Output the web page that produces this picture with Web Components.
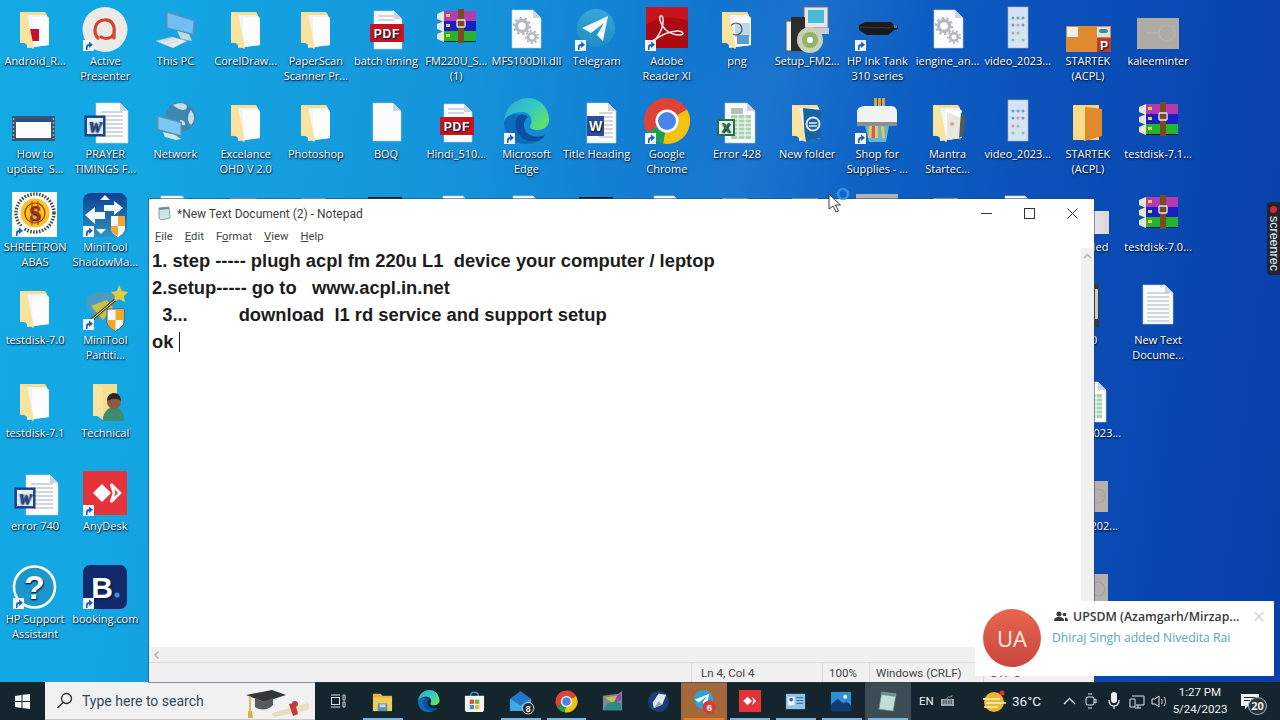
<!DOCTYPE html>
<html lang="en">
<head>
<meta charset="utf-8">
<title>Desktop</title>
<style>
    html, body { margin: 0; height: 100%; overflow: hidden; }
    win-desktop { height: 720px; }
</style>
</head>
<body>
<win-desktop>
    <desk-icon kind="folderRed" col="1" row="1">Android_R...</desk-icon>
    <desk-icon kind="presenter" col="2" row="1" short>Active<br>Presenter</desk-icon>
    <desk-icon kind="pc" col="3" row="1">This PC</desk-icon>
    <desk-icon kind="folder" col="4" row="1">CorelDraw...</desk-icon>
    <desk-icon kind="folder" col="5" row="1">PaperScan<br>Scanner Pr...</desk-icon>
    <desk-icon kind="pdf" col="6" row="1">batch timing</desk-icon>
    <desk-icon kind="rar" col="7" row="1">FM220U_S...<br>(1)</desk-icon>
    <desk-icon kind="gears" col="8" row="1">MFS100DII.dll</desk-icon>
    <desk-icon kind="telegram" col="9" row="1" short>Telegram</desk-icon>
    <desk-icon kind="adobe" col="10" row="1" short>Adobe<br>Reader XI</desk-icon>
    <desk-icon kind="folderPng" col="11" row="1">png</desk-icon>
    <desk-icon kind="setup" col="12" row="1">Setup_FM2...</desk-icon>
    <desk-icon kind="inkTank" col="13" row="1" short>HP Ink Tank<br>310 series</desk-icon>
    <desk-icon kind="gears" col="14" row="1">iengine_an...</desk-icon>
    <desk-icon kind="phone" col="15" row="1">video_2023...</desk-icon>
    <desk-icon kind="ppt" col="16" row="1">STARTEK<br>(ACPL)</desk-icon>
    <desk-icon kind="photo" col="17" row="1">kaleeminter</desk-icon>

    <desk-icon kind="film" col="1" row="2">How to<br>update  S...</desk-icon>
    <desk-icon kind="word" col="2" row="2">PRAYER<br>TIMINGS F...</desk-icon>
    <desk-icon kind="network" col="3" row="2">Network</desk-icon>
    <desk-icon kind="folder" col="4" row="2">Excelance<br>OHD V 2.0</desk-icon>
    <desk-icon kind="folder" col="5" row="2">Photoshop</desk-icon>
    <desk-icon kind="blank" col="6" row="2">BOQ</desk-icon>
    <desk-icon kind="pdf" col="7" row="2">Hindi_510...</desk-icon>
    <desk-icon kind="edge" col="8" row="2" short>Microsoft<br>Edge</desk-icon>
    <desk-icon kind="word2" col="9" row="2">Title Heading</desk-icon>
    <desk-icon kind="chrome" col="10" row="2" short>Google<br>Chrome</desk-icon>
    <desk-icon kind="excel" col="11" row="2">Error 428</desk-icon>
    <desk-icon kind="folderBlue" col="12" row="2">New folder</desk-icon>
    <desk-icon kind="printer" col="13" row="2" short>Shop for<br>Supplies - ...</desk-icon>
    <desk-icon kind="folderMantra" col="14" row="2">Mantra<br>Startec...</desk-icon>
    <desk-icon kind="phone" col="15" row="2">video_2023...</desk-icon>
    <desk-icon kind="folderOrange" col="16" row="2">STARTEK<br>(ACPL)</desk-icon>
    <desk-icon kind="rar" col="17" row="2">testdisk-7.1...</desk-icon>

    <desk-icon kind="shreetron" col="1" row="3" short>SHREETRON<br>ABAS</desk-icon>
    <desk-icon kind="shadow" col="2" row="3" short>MiniTool<br>ShadowMa...</desk-icon>
    <desk-icon kind="gears" col="3" row="3"></desk-icon>
    <desk-icon kind="folder" col="4" row="3"></desk-icon>
    <desk-icon kind="folder" col="5" row="3"></desk-icon>
    <desk-icon kind="blackTop" col="6" row="3"></desk-icon>
    <desk-icon kind="blank" col="7" row="3"></desk-icon>
    <desk-icon kind="blank" col="8" row="3"></desk-icon>
    <desk-icon kind="blackTop" col="9" row="3"></desk-icon>
    <desk-icon kind="blank" col="10" row="3"></desk-icon>
    <desk-icon kind="folder" col="11" row="3"></desk-icon>
    <desk-icon kind="folder" col="12" row="3"></desk-icon>
    <desk-icon kind="photo3" col="13" row="3"></desk-icon>
    <desk-icon kind="folder" col="14" row="3"></desk-icon>
    <desk-icon kind="blank" col="15" row="3"></desk-icon>
    <desk-icon kind="sheet" col="16" row="3">Untitled</desk-icon>
    <desk-icon kind="rar" col="17" row="3">testdisk-7.0...</desk-icon>

    <desk-icon kind="folder" col="1" row="4">testdisk-7.0</desk-icon>
    <desk-icon kind="wizard" col="2" row="4" short>MiniTool<br>Partiti...</desk-icon>
    <desk-icon kind="darkShot" col="16" row="4">100</desk-icon>
    <desk-icon kind="lines" col="17" row="4">New Text<br>Docume...</desk-icon>

    <desk-icon kind="folder" col="1" row="5">testdisk-7.1</desk-icon>
    <desk-icon kind="folderMan" col="2" row="5">Technical</desk-icon>
    <desk-icon kind="excel" col="16" row="5">video_2023...</desk-icon>

    <desk-icon kind="word" col="1" row="6">error 740</desk-icon>
    <desk-icon kind="anydesk" col="2" row="6" short>AnyDesk</desk-icon>
    <desk-icon kind="photo2" col="16" row="6">video_202...</desk-icon>

    <desk-icon kind="help" col="1" row="7" short>HP Support<br>Assistant</desk-icon>
    <desk-icon kind="booking" col="2" row="7" short>booking.com</desk-icon>
    <desk-icon kind="photo2" col="16" row="7"></desk-icon>
</win-desktop>

<script>
// icons in a 48x48 box, the middle of the box sits on the middle of the cell
const page = (x = 11, y = 5, w = 28, h = 38) => `
    <path d="M${x} ${y}h${w - 8}l8 8v${h - 8}h-${w}z" fill="#fbfcfd" stroke="#c4ced8" stroke-width=".6"/>
    <path d="M${x + w - 8} ${y}v8h8z" fill="#cdd4db"/>`;
const rows = (x1, x2, y1, y2, step = 4, c = "#a9b2ba") => {
    let s = "";
    for (let y = y1; y <= y2; y += step) s += `<path d="M${x1} ${y}H${x2}" stroke="${c}" stroke-width="1"/>`;
    return s;
};
const folder = (paper = "") => `
    <path d="M9 7h25l2 3v28H9z" fill="#f6dd95"/>
    <path d="M15 10h20l3 3v27l-22 3z" fill="#f1f3f6"/>
    <path d="M21 12l17 1v27l-17 2z" fill="#fdfdfe"/>
    ${paper}
    <path d="M9 7l7 2 7 34-1 1-13-9z" fill="#f8e39f"/>`;
const word = (x, y, s = 19) => `
    <rect x="${x}" y="${y}" width="${s}" height="${s}" fill="#1e4d9e" stroke="#16397a"/>
    <rect x="${x + 2}" y="${y + 2}" width="${s - 4}" height="${s - 4}" fill="#e9eef6"/>
    <text x="${x + s / 2}" y="${y + s - 4}" text-anchor="middle" font-family="Liberation Serif" font-style="italic" font-weight="700" font-size="${s * .75}" fill="#1e4d9e">W</text>`;
const gearDoc = `
    <circle cx="20" cy="21" r="5.5" fill="none" stroke="#b4b9bd" stroke-width="3.4"/>
    <circle cx="20" cy="21" r="8" fill="none" stroke="#b4b9bd" stroke-width="2.2" stroke-dasharray="2.4 2.6"/>
    <circle cx="30" cy="32" r="3.8" fill="none" stroke="#b4b9bd" stroke-width="2.6"/>
    <circle cx="30" cy="32" r="6" fill="none" stroke="#b4b9bd" stroke-width="2" stroke-dasharray="2 2.2"/>`;
const chrome = `
    <path d="M24 23L4 34.5A23 23 0 0 1 44 11.5z" fill="#db4437"/>
    <path d="M24 23L44 11.5A23 23 0 0 1 20 45.6z" fill="#f4c20d"/>
    <path d="M24 23L20 45.6A23 23 0 0 1 4 34.5z" fill="#1f9d55"/>
    <circle cx="24" cy="23" r="11.5" fill="#fff"/><circle cx="24" cy="23" r="9" fill="#4a84ea"/>`;
const edge = `
    <defs><linearGradient id="eg" x1="0" y1="0" x2="1" y2=".6"><stop offset="0" stop-color="#2aa8d8"/><stop offset=".6" stop-color="#35c9c0"/><stop offset="1" stop-color="#5edf6c"/></linearGradient></defs>
    <path d="M2 24C3 9 14 0 26 0c12 0 21 10 21 22 0 7-6 10-12 10-5 0-9-2-6-6 2-4-1-12-9-12-9 0-16 4-18 10z" fill="url(#eg)"/>
    <path d="M2 24c2-7 10-9 16-7-5 3-6 11-3 17 4 8 15 12 23 8-5 3-10 4-15 4C11 46 2 36 2 24z" fill="#0e6cc0"/>
    <path d="M18 17c-5 3-6 11-3 17 4 8 15 12 23 8 2-1 4-3 5-5-6 3-17 2-20-5-2-5-1-11 3-13-2-2-5-3-8-2z" fill="#0b4f9e"/>`;
const rarSlab = (y, c) => `
    <path d="M5 ${y + 3}l7-3h32v9l-1 2H12l-7-3z" fill="#e9e6da"/>
    <path d="M12 ${y}h32v10H12z" fill="${c}"/><path d="M12 ${y + 10}h32v1H12z" fill="#0b1030"/>
    <rect x="14" y="${y + 3}" width="4" height="3" fill="#e8d24a"/>`;

const ICONS = {
    folder: folder(),
    folderRed: folder(`<rect x="17" y="24" width="11" height="12" fill="#c8102e"/>`),
    folderPng: folder(`<rect x="22" y="18" width="15" height="14" fill="#bcd8e8"/><rect x="24" y="30" width="12" height="9" fill="#5a9fd0"/><circle cx="23" cy="24" r="6" fill="none" stroke="#556" stroke-width="1.2"/>`),
    folderBlue: folder(`<path d="M20 10l18 2v28l-16 3z" fill="#19639e"/><circle cx="30" cy="26" r="6.5" fill="none" stroke="#dfeaf3" stroke-width="2"/><path d="M26 25h8M26 28h8" stroke="#dfeaf3" stroke-width="1.6"/>`),
    folderMantra: folder(`<path d="M23 14l14 6-2 20-12 2z" fill="#e9e6df"/><path d="M37 14l5 6-3 18-4 2z" fill="#4d5a5e"/><circle cx="28" cy="26" r="2" fill="#c8b27a"/>`),
    folderOrange: `<path d="M9 7h26v35H9z" fill="#f4d67c"/><path d="M21 9l17 2v27l-17 5z" fill="#e08a2c"/><path d="M9 7l12 2v34L9 36z" fill="#f8dc8a"/>`,
    folderMan: `<path d="M12 7h24v32H12z" fill="#f6dd95"/><path d="M12 7l10 3v33l-10-7z" fill="#f8e39f"/>
        <path d="M22 44c0-10 6-14 11-14s10 4 10 14z" fill="#3d8c6c"/><circle cx="33" cy="25" r="7" fill="#8c5b3c"/><path d="M26 24c0-6 4-8 7-8 4 0 7 3 7 8-3-3-9-3-14 0z" fill="#2f2520"/>`,
    presenter: `<circle cx="24" cy="24.5" r="22.5" fill="#eceae6"/>
        <path d="M17 33c-5-5-4-17 6-18 8-1 11 6 10 12v6" fill="none" stroke="#d2452f" stroke-width="3.2" stroke-linecap="round"/>
        <path d="M33 29c-3 5-10 6-14 2" fill="none" stroke="#d2452f" stroke-width="3"/>`,
    pc: `<path d="M15 6l29 9-1 15-28-7z" fill="#5d8fb8"/><path d="M16.500 8l26 8-1 12.500-25-6z" fill="#6fc0f2"/>
        <path d="M26 26l12 3 3 7-11-2z" fill="#c6d6e0"/>
        <path d="M5 36l16-4 15 4-14 7z" fill="#e6edf2" stroke="#a7b8c4" stroke-width=".5"/><path d="M9 36l12-3M12 37l12-3M15 39l12-3" stroke="#b9c6cf" stroke-width=".7"/>`,
    network: `<circle cx="29.500" cy="19" r="15" fill="#3f88ad"/><path d="M22 7c6-3 14-2 14 2-1 5-9 3-14-2zM40 12c4 5 4 11 0 15-4-3-4-10 0-15zM29 22c3 0 6 2 5 5-3 1-5-2-5-5z" fill="#c9dde8"/>
        <path d="M6 17l25 7v15L6 32z" fill="#5d8fb8"/><path d="M7.500 19l22 6v12l-22-6z" fill="#7ac8f4"/><path d="M12 34l12 3 6 4-5 1-11-3z" fill="#d5e3ec"/>`,
    pdf: page(12, 6, 28, 38) + rows(16, 32, 11, 17) + `
        <rect x="8" y="19" width="34" height="18" fill="#c8141f"/>
        <text x="25" y="32.5" text-anchor="middle" font-family="Liberation Sans" font-weight="700" font-size="12" letter-spacing=".8" fill="#fff">PDF</text>`,
    blank: page(),
    sheet: `<defs><linearGradient id="sg"><stop offset="0" stop-color="#fff"/><stop offset="1" stop-color="#d8d8d8"/></linearGradient></defs><rect x="2" y="20" width="43" height="23" fill="url(#sg)"/>`,
    gears: page(10, 5, 29, 38) + gearDoc,
    lines: page(9, 1, 30, 39) + rows(13, 35, 9, 37),
    word: page(15, 5, 32, 40) + rows(20, 42, 14, 41) + word(4, 18, 20),
    word2: page(14, 5, 29, 40) + rows(26, 40, 15, 41) + `<rect x="14" y="18" width="17" height="20" fill="#2a4f9b"/>
        <text x="22.5" y="33" text-anchor="middle" font-family="Liberation Sans" font-weight="700" font-size="14" fill="#fff">W</text>`,
    excel: `<path d="M12 5h22l8 8v32H12z" fill="#fbfcfb" stroke="#bcc7c4" stroke-width=".6"/>
        <path d="M34 5v8h8z" fill="#cdd4db"/><path d="M18 10h12v6H18z" fill="#b6bdb9"/><path d="M18 17h20v24H18z" fill="#a9d2b2"/>
        <path d="M18 21h20M18 25h20M18 29h20M18 33h20M18 37h20M25 17v24M32 17v24" stroke="#fff"/>
        <rect x="4" y="21" width="18" height="17" fill="#1f7346"/><rect x="6" y="23" width="14" height="13" fill="#e9f3ed"/>
        <text x="13" y="34" text-anchor="middle" font-family="Liberation Sans" font-weight="700" font-size="13" fill="#1f7346">X</text>`,
    rar: rarSlab(6, "#b63ab0") + rarSlab(16, "#1a1fc4") + rarSlab(26, "#25b52c") + `
        <rect x="26" y="4" width="6" height="34" fill="#7a4a22"/><rect x="25" y="15" width="8" height="7" rx="1" fill="none" stroke="#e6e6e6" stroke-width="1.4"/>`,
    telegram: `<defs><linearGradient id="tg" x1="0" y1="0" x2="0" y2="1"><stop offset="0" stop-color="#37a6d8"/><stop offset="1" stop-color="#1d8fc0"/></linearGradient></defs>
        <circle cx="23" cy="23" r="19" fill="url(#tg)"/>
        <path d="M9 23L35 11l-5 25-6-6 7-12-13 10z" fill="#f2fafd"/>`,
    adobe: `<rect x="3" y="2" width="42" height="41" fill="#ac0a12"/><path d="M3 2h42v14C30 10 15 12 3 20z" fill="#c8141c"/>
        <path d="M9 36c6-2 12-14 11-22-.5-5-4-4-3 1 2 8 9 15 20 15 5 0 3-4-2-4-8 0-18 4-24 10-1 1-2 1-2 0z" fill="none" stroke="#f4e8e8" stroke-width="1.5"/>`,
    setup: `<rect x="21" y="2" width="24" height="21" fill="#e4e6e8" stroke="#777"/><rect x="25" y="5" width="16" height="13" fill="#49b9d6"/><rect x="26" y="23" width="20" height="6" fill="#c9ccd0"/>
        <rect x="3" y="16" width="17" height="30" fill="#f1f1f1" stroke="#555"/><rect x="8" y="12" width="14" height="34" fill="#2d2d2d"/>
        <circle cx="27" cy="35" r="13" fill="#c8d2b6"/><circle cx="27" cy="35" r="8" fill="#8fb46a"/><circle cx="27" cy="35" r="3" fill="#fff"/>`,
    inkTank: `<path d="M6 20l6-3h26l3 3h4v4l-4 1-6 5H14l-8-5z" fill="#1a1a1a"/><path d="M7 22l30 1 4-3" stroke="#3f3f3f" fill="none"/><rect x="41" y="20" width="3" height="3" fill="#58707c"/>`,
    blackTop: `<rect x="6" y="6" width="34" height="30" fill="#1d1a16"/>`,
    printer: `<path d="M21 0h3v9h-3zM25 0h3v9h-3zM29 0h3v9h-3z" fill="#d6a23c"/>
        <path d="M4 14c0-4 4-6 8-6h26c4 0 6 3 6 6v10H4z" fill="#f0f2f3"/><path d="M4 24h40v4H4z" fill="#8a8f92"/>
        <path d="M12 28h24l-3 16H16z" fill="#5fb6d6"/><path d="M16 28l-1 12h3l1-12zM22 28v12h3V28zM28 28l1 12h3l-1-12z" fill="#e7c94c"/><path d="M19 28v12h3V28z" fill="#d9566a"/>`,
    phone: `<rect x="14" y="2" width="20" height="41" fill="#d7e3f0" stroke="#a5b6cc" stroke-width=".6"/>
        <g fill="#6f9bc8"><circle cx="19" cy="13" r="1.5"/><circle cx="24" cy="13" r="1.5"/><circle cx="29" cy="13" r="1.5"/><circle cx="19" cy="20" r="1.5"/><circle cx="29" cy="20" r="1.5"/></g>
        <g fill="#dc8fa0"><circle cx="24" cy="20" r="1.5"/><circle cx="19" cy="28" r="1.5"/></g><g fill="#7fc7a2"><circle cx="24" cy="28" r="1.5"/><circle cx="29" cy="35" r="1.5"/><circle cx="19" cy="35" r="1.5"/></g>`,
    ppt: `<rect x="2" y="21" width="45" height="26" fill="#e08a30"/><rect x="3" y="22" width="11" height="10" fill="#eef0ef"/>
        <rect x="33" y="22" width="13" height="10" fill="#dde4e4"/><rect x="35" y="24" width="9" height="4" rx="2" fill="#3c86b0"/>
        <rect x="33" y="33" width="14" height="14" fill="#c23b22"/><text x="40" y="44.5" text-anchor="middle" font-family="Liberation Sans" font-weight="700" font-size="12" fill="#fff">P</text>`,
    photo: `<rect x="3" y="13" width="42" height="31" fill="#aeaba6"/><circle cx="33" cy="28" r="8" fill="none" stroke="#b8b5b0" stroke-width="1.200"/><path d="M12 28h14" stroke="#b6b3ae" stroke-width="2"/>`,
    photo2: `<rect x="2" y="11" width="42" height="31" fill="#b4b1ac"/><circle cx="34" cy="26" r="7" fill="none" stroke="#a5a29d" stroke-width="1.200"/>`,
    photo3: `<rect x="3" y="3" width="42" height="31" fill="#b4b1ac"/>`,
    darkShot: `<rect x="2" y="0" width="33" height="43" fill="#3c3a38"/><rect x="31" y="5" width="3" height="30" fill="#c9c9c6"/>`,
    film: `<rect x="1" y="18" width="43" height="25" fill="#39566c"/><rect x="5" y="21" width="35" height="19" fill="#fdfdfd"/><rect x="5" y="21" width="35" height="3" fill="#2b4a9a"/>
        <path d="M2.500 20v21M42.500 20v21" stroke="#8fa4b3" stroke-width="1.600" stroke-dasharray="2 2"/>`,
    edge,
    chrome,
    shreetron: `<rect x="1" y="1" width="45" height="45" fill="#fff"/><circle cx="24" cy="22" r="19" fill="none" stroke="#4a4a4a" stroke-width="3.400" stroke-dasharray="1.600 1.400"/>
        <circle cx="24" cy="22" r="14.500" fill="#f6c81c"/><circle cx="24" cy="22" r="10" fill="none" stroke="#b5281c" stroke-width="1.200"/>
        <text x="24" y="29" text-anchor="middle" font-family="Liberation Serif" font-weight="700" font-size="20" fill="#b5281c">S</text><path d="M21 10v24M27 10v24" stroke="#b5281c"/>`,
    shadow: `<defs><linearGradient id="sh" x1="0" y1="0" x2="0" y2="1"><stop offset="0" stop-color="#0f3f8e"/><stop offset="1" stop-color="#2f93c4"/></linearGradient></defs>
        <rect x="2" y="2" width="44" height="44" rx="8" fill="url(#sh)"/>
        <path d="M24 4l5 5H19zM20 43l-5-5h10z" fill="#f2f7fa"/><path d="M4 24l10-8v5h10v7H14v5zM42 17l-9-7v4H23v6h10v4z" fill="#f2f7fa"/>
        <path d="M30 25h14v12c0 5-4 7-7 9-3-2-7-4-7-9z" fill="#f7f7f5"/><path d="M37 25h7v10h-7zM30 35h7v10c-3-1-7-4-7-8z" fill="#efa72e"/>`,
    wizard: `<path d="M6 14c5-7 22-8 30-2l-8 24C16 38 3 28 6 14z" fill="#4f9bc0"/><path d="M10 22l16-6 6 8-10 12z" fill="#c8c24a"/>
        <path d="M38 1l3 6 6 1-4 4 1 6-6-3-5 3 1-6-4-4 6-1z" fill="#e8cb3c"/><path d="M8 38L34 16" stroke="#5a4a22" stroke-width="3"/><path d="M8 38L34 16" stroke="#efe6b0"/>
        <path d="M26 25h17v12c0 5-5 8-8.500 10-3.500-2-8.500-5-8.500-10z" fill="#f6f6f4" stroke="#2d5d96"/><path d="M34.500 25H43v11h-8.500zM26 36h8.500v11c-3.500-2-8.500-5-8.500-11z" fill="#efa72e"/>`,
    anydesk: `<rect x="2" y="1" width="44" height="44" fill="#e4343a"/><path d="M21 14l9 9-9 9-9-9z" fill="#fff"/><path d="M30 14l9 9-9 9 3-9z" fill="none" stroke="#fff" stroke-width="2.600"/>`,
    help: `<circle cx="23.500" cy="24" r="20.500" fill="#1b97cc" stroke="#fff" stroke-width="2.500"/>
        <text x="23.500" y="36" text-anchor="middle" font-family="Liberation Sans" font-weight="700" font-size="34" fill="#fff">?</text>`,
    booking: `<rect x="2" y="2" width="44" height="44" rx="7" fill="#14296b"/>
        <text x="21" y="35" text-anchor="middle" font-family="Liberation Sans" font-weight="700" font-size="30" fill="#fff">B</text><circle cx="36" cy="32" r="2.600" fill="#2f9ad8"/>`
};
const SHORTCUT = `<g transform="translate(2,35)"><rect width="11" height="11" fill="#f3f6fa"/>
    <path d="M3 10V7c0-2 1-3 3-3V1.500L10 4.800 6 8V6C5 6 4.500 7 4.500 10z" fill="#1b62c6"/></g>`;

class WinDesktop extends HTMLElement {
    constructor() {
        super();
        this.attachShadow({ mode: "open" });
    }

    connectedCallback() {
        this.shadowRoot.innerHTML = `
            <style>
                :host {
                    display: flex;
                    flex-direction: column;
                    position: relative;
                    overflow: hidden;
                    font-family: "Open Sans", "Noto Sans", sans-serif;
                }
                .wall {
                    flex: 1;
                    min-height: 0;
                    overflow: hidden;
                    display: grid;
                    grid-template-columns: repeat(18, 70.2px);
                    grid-auto-rows: 93px;
                    padding-top: 5px;
                    background:
                        linear-gradient(112deg, transparent 46%, rgba(255,255,255,.05) 52%, transparent 60%),
                        linear-gradient(97deg, #14a9e4 0%, #13a8e4 10%, #1593da 35%, #0f6ccb 58%, #0b50b9 78%, #083fa9 100%);
                }
            </style>
            <div class="wall"><slot></slot></div>
            <task-bar></task-bar>
            <note-pad></note-pad>
            <toast-card></toast-card>
            <rec-tab></rec-tab>
            <mouse-pointer></mouse-pointer>
        `;
    }
}

class DeskIcon extends HTMLElement {
    constructor() {
        super();
        this.attachShadow({ mode: "open" });
    }

    connectedCallback() {
        this.style.gridColumn = this.getAttribute("col");
        this.style.gridRow = this.getAttribute("row");
        const kind = this.getAttribute("kind");
        this.shadowRoot.innerHTML = `
            <style>
                :host {
                    display: flex;
                    flex-direction: column;
                    align-items: center;
                    min-width: 0;
                    font: 11px/14.5px "Open Sans", sans-serif;
                    color: #fff;
                    text-align: center;
                    text-shadow: 0 1px 2px #001a3a, 1px 1px 1px rgba(0,20,50,.7);
                }
                svg { width: 48px; height: 48px; flex: none; overflow: visible; }
                .name { margin-top: 1px; width: 76px; white-space: pre; }
            </style>
            <svg viewBox="0 0 48 48">${ICONS[kind]}${this.hasAttribute("short") ? SHORTCUT : ""}</svg>
            <div class="name"><slot></slot></div>
        `;
    }
}

class NotePad extends HTMLElement {
    constructor() {
        super();
        this.attachShadow({ mode: "open" });
    }

    connectedCallback() {
        this.shadowRoot.innerHTML = `
            <style>
                :host {
                    position: absolute;
                    left: 149px;
                    top: 199px;
                    width: 945px;
                    height: 483px;
                    display: flex;
                    flex-direction: column;
                    background: #fff;
                    box-shadow: 0 0 0 1px rgba(40,70,100,.55);
                    font: 12px Roboto, sans-serif;
                    color: #333;
                }
                .title { height: 28px; display: flex; align-items: center; padding-left: 8px; flex: none; }
                .title svg.app { width: 15px; height: 15px; margin-right: 5px; }
                .title span { flex: 1; color: #3c3c3c; font-size: 12px; padding-top: 1px; }
                .ctl { width: 43px; height: 28px; display: flex; align-items: center; justify-content: center; }
                .ctl svg { width: 11px; height: 11px; }
                .menu { height: 21px; box-sizing: border-box; padding: 0 0 2px 6px; display: flex; align-items: center; gap: 12px; flex: none; font-size: 11.3px; color: #444; }
                .mid { flex: 1; display: flex; min-height: 0; }
                .edit {
                    flex: 1;
                    margin: -1px 0 0;
                    padding: 0 0 0 3px;
                    font: 700 18.35px/27px "Liberation Sans", Arial, sans-serif;
                    color: #1c1c1c;
                    white-space: pre;
                }
                .caret { display: inline-block; width: 1px; height: 20px; background: #222; vertical-align: -4px; }
                .vbar { width: 13px; background: #f0f0f0; display: flex; justify-content: center; padding-top: 5px; box-sizing: border-box; }
                .vbar svg, .hbar svg { width: 9px; height: 6px; }
                .hbar { height: 15px; background: #f0f0f0; flex: none; display: flex; align-items: center; padding-left: 3px; border-bottom: 1px solid #dcdcdc; }
                .status { height: 19px; background: #f0f0f0; flex: none; display: flex; align-items: center; font-size: 11.6px; color: #444; }
                .status div { box-sizing: border-box; height: 100%; line-height: 20px; padding-left: 9px; border-left: 1px solid #d9d9d9; }
                .status .sp { flex: 1; border: 0; padding: 0; }
            </style>
            <div class="title">
                <svg class="app" viewBox="0 0 15 15">
                    <path d="M2 2l10-1 1 11-9 2-2-2z" fill="#cfe6e2" stroke="#8aa0a0"/>
                    <path d="M2 2l10-1v2L2 4z" fill="#6c8a90"/>
                </svg>
                <span>*New Text Document (2) - Notepad</span>
                <div class="ctl"><svg viewBox="0 0 11 11"><path d="M0 5.500h11" stroke="#333"/></svg></div>
                <div class="ctl"><svg viewBox="0 0 11 11"><rect x=".5" y=".5" width="10" height="10" fill="none" stroke="#333"/></svg></div>
                <div class="ctl"><svg viewBox="0 0 11 11"><path d="M.5.500l10 10M10.500.500l-10 10" stroke="#333"/></svg></div>
            </div>
            <div class="menu">
                <span><u>F</u>ile</span><span><u>E</u>dit</span><span>F<u>o</u>rmat</span><span><u>V</u>iew</span><span><u>H</u>elp</span>
            </div>
            <div class="mid">
                <div class="edit">1. step ----- plugh acpl fm 220u L1  device your computer / leptop
2.setup----- go to   www.acpl.in.net
  3...          download  l1 rd service and support setup
ok <i class="caret"></i></div>
                <div class="vbar"><svg viewBox="0 0 9 6"><path d="M1 5l3.500-3.500L8 5" fill="none" stroke="#b5b5b5" stroke-width="1.500"/></svg></div>
            </div>
            <div class="hbar"><svg viewBox="0 0 9 6" style="transform:rotate(-90deg)"><path d="M1 5l3.500-3.500L8 5" fill="none" stroke="#b5b5b5" stroke-width="1.500"/></svg></div>
            <div class="status">
                <div class="sp"></div>
                <div style="width:131px">Ln 4, Col 4</div>
                <div style="width:47px;padding-left:6px">100%</div>
                <div style="width:114px;padding-left:6px">Windows (CRLF)</div>
                <div style="width:111px;padding-left:6px">UTF-8</div>
            </div>
        `;
    }
}

class ToastCard extends HTMLElement {
    constructor() {
        super();
        this.attachShadow({ mode: "open" });
    }

    connectedCallback() {
        this.shadowRoot.innerHTML = `
            <style>
                :host {
                    position: absolute;
                    left: 975px;
                    top: 601px;
                    width: 299px;
                    height: 75px;
                    box-sizing: border-box;
                    padding: 8px 8px 0 8px;
                    background: #fff;
                    display: flex;
                    gap: 11px;
                    font: 12.300px "Open Sans", sans-serif;
                }
                .av {
                    width: 58px;
                    height: 58px;
                    border-radius: 50%;
                    flex: none;
                    background: linear-gradient(#e8654f, #c9473e);
                    color: #fdeee6;
                    font-size: 22px;
                    display: flex;
                    align-items: center;
                    justify-content: center;
                }
                .txt { flex: 1; min-width: 0; margin-top: -1px; }
                .head { display: flex; align-items: center; gap: 5px; height: 16px; font-weight: 600; color: #3a3a3a; white-space: nowrap; padding-left: 2px; }
                .head svg { width: 14px; height: 11px; flex: none; }
                .head span { flex: 1; }
                .x { width: 11px; height: 11px; }
                .sub { margin-top: 5px; color: #57a7bd; white-space: nowrap; font-size: 12.200px; line-height: 18px; }
            </style>
            <div class="av">UA</div>
            <div class="txt">
                <div class="head">
                    <svg viewBox="0 0 14 11"><circle cx="5" cy="3" r="2.500" fill="#3a3a3a"/><path d="M0 10c0-3 2-4 5-4s5 1 5 4z" fill="#3a3a3a"/><circle cx="10.500" cy="3.500" r="1.800" fill="#3a3a3a"/><path d="M11 6.500c2 0 3 1.500 3 3.500h-3z" fill="#3a3a3a"/></svg>
                    <span>UPSDM (Azamgarh/Mirzap...</span>
                    <svg class="x" viewBox="0 0 11 11"><path d="M1 1l9 9M10 1l-9 9" stroke="#cfd3d6" stroke-width="1.300"/></svg>
                </div>
                <div class="sub">Dhiraj Singh added Nivedita Rai</div>
            </div>
        `;
    }
}

class RecTab extends HTMLElement {
    constructor() {
        super();
        this.attachShadow({ mode: "open" });
    }

    connectedCallback() {
        this.shadowRoot.innerHTML = `
            <style>
                :host {
                    position: absolute;
                    left: 1267px;
                    top: 202px;
                    width: 13px;
                    height: 73px;
                    background: #20262c;
                    border-radius: 4px 0 0 4px;
                    color: #eef;
                    display: flex;
                    flex-direction: column;
                    align-items: center;
                    font: 12.500px/13px "Liberation Sans", sans-serif;
                }
                i { width: 7px; height: 7px; border-radius: 50%; background: #d8262c; margin-top: 4px; flex: none; }
                span { writing-mode: vertical-rl; margin-top: 3px; }
            </style>
            <i></i><span>screenrec</span>
        `;
    }
}

class MousePointer extends HTMLElement {
    constructor() {
        super();
        this.attachShadow({ mode: "open" });
    }

    connectedCallback() {
        this.shadowRoot.innerHTML = `
            <style>
                :host { position: absolute; left: 828px; top: 187px; width: 24px; height: 28px; }
                svg { width: 24px; height: 28px; overflow: visible; }
            </style>
            <svg viewBox="0 0 24 28">
                <circle cx="15" cy="7" r="5" fill="none" stroke="#3a9be8" stroke-width="2.500" opacity=".85"/>
                <path d="M1 7v15l4-3 3 6 2.500-1-3-6h5z" fill="#fff" stroke="#222" stroke-width=".9"/>
            </svg>
        `;
    }
}

const TASK_ICONS = [
    { svg: `<path d="M2 4h8l2 2h10v4H2z" fill="#e3b53a"/><path d="M2 8h20v14H2z" fill="#f0cd58"/><path d="M7 14h10v8H7z" fill="#5b93b5"/><path d="M9 15h6v3H9z" fill="#c9dce6"/>`, on: 1 },
    { svg: edge.replace(/id="eg"/, 'id="eg2"').replace("url(#eg)", "url(#eg2)"), box: "0 0 48 48" },
    { svg: `<path d="M8 6c0-5 8-5 8 0" fill="none" stroke="#3a93cf" stroke-width="1.500"/><path d="M2 6h20v14c0 2-1 3-3 3H5c-2 0-3-1-3-3z" fill="#f4f4f4"/><rect x="7" y="10" width="4.500" height="4.500" fill="#e5532d"/><rect x="12.500" y="10" width="4.500" height="4.500" fill="#7cb53a"/><rect x="7" y="15.500" width="4.500" height="4.500" fill="#2c9be0"/><rect x="12.500" y="15.500" width="4.500" height="4.500" fill="#f0b82c"/>` },
    { svg: `<path d="M1 9l11-8 11 8v12H1z" fill="#1f78c8"/><path d="M1 9l11 7 11-7v13H1z" fill="#40a6e6"/><circle cx="20" cy="19" r="6" fill="#2a3135" stroke="#cfd6da"/><text x="20" y="22.500" text-anchor="middle" font-family="Liberation Sans" font-weight="700" font-size="9" fill="#fff">8</text>`, on: 1 },
    { svg: chrome, box: "0 0 48 46", on: 1 },
    { svg: `<path d="M2 6l16-2 4-3v20H2z" fill="#7c8a94"/><path d="M4 8l13-2-4 8z" fill="#c9c04a"/><path d="M13 14l4-8 4-3v7z" fill="#9a3fb4"/><path d="M3 20c3-7 10-9 18-6v7H3z" fill="#2b8a8c"/>` },
    { svg: `<circle cx="12" cy="12" r="11" fill="#1c3d78"/><path d="M7 19l-1-6 6-9 8 1-4 10z" fill="#e6ebf0"/><path d="M7 19l5-7 4 3z" fill="#9aa7b4"/>` },
    { svg: `<circle cx="11" cy="10" r="10" fill="#2fa3d6"/><path d="M2 10l15-6-3 13-4-4 4-6-8 6z" fill="#f3fafd"/><circle cx="17" cy="18" r="7" fill="#d83b38"/><text x="17" y="21.500" text-anchor="middle" font-family="Liberation Sans" font-weight="700" font-size="10" fill="#fff">6</text>`, bg: "#a5683a", line: "#ee7a20" },
    { svg: `<rect x="0" y="0" width="23" height="23" fill="#e4343a"/><path d="M9 7l4.500 4.500L9 16l-4.500-4.500z" fill="#fff"/><path d="M13.500 7l4.500 4.500-4.500 4.500 1.500-4.500z" fill="#fff"/>`, on: 1 },
    { svg: `<rect x="2" y="4" width="20" height="16" fill="#8fc4e4"/><rect x="4" y="7" width="7" height="9" fill="#e9f2f8"/><circle cx="7.500" cy="10" r="2" fill="#2a6ea8"/><path d="M13 8h7M13 11h7M13 14h7" stroke="#2a6ea8"/>`, on: 1 },
    { svg: `<rect x="1" y="2" width="21" height="20" fill="#2f8fd2"/><path d="M1 22V15l7-6 6 5 3-2 5 4v6z" fill="#123c78"/><circle cx="16" cy="7" r="2" fill="#fff"/>`, on: 1 },
    { svg: `<path d="M6 2l15 2-3 18-15-2z" fill="#bfe0d6" stroke="#6e8a84" stroke-width=".7"/><path d="M6 2l15 2-1 3L5 5z" fill="#6f8f8a"/>`, bg: "#3c4c55", on: 1 }
];

class TaskBar extends HTMLElement {
    constructor() {
        super();
        this.attachShadow({ mode: "open" });
    }

    connectedCallback() {
        const buttons = TASK_ICONS.map(t => {
            const line = t.line || (t.on ? "#7fb5dd" : "");
            return `<div class="btn" style="background:${t.bg || "transparent"}">
                <svg viewBox="${t.box || "0 0 24 24"}">${t.svg}</svg>
                ${line ? `<i style="background:${line}"></i>` : ""}
            </div>`;
        }).join("");

        this.shadowRoot.innerHTML = `
            <style>
                :host {
                    display: flex;
                    height: 38px;
                    flex: none;
                    background: #14252e;
                    color: #eef2f4;
                    font: 12px Roboto, sans-serif;
                }
                .start { width: 45px; display: flex; align-items: center; justify-content: center; flex: none; }
                .start svg { width: 15px; height: 15px; }
                .search {
                    width: 270px;
                    flex: none;
                    box-sizing: border-box;
                    background: #f1f1f1;
                    display: flex;
                    align-items: center;
                    padding-left: 11px;
                    color: #33495a;
                    font-size: 14px;
                    border-bottom: 1px solid #c9c9c9;
                }
                .search .glass { width: 17px; height: 17px; margin-right: 9px; }
                .search .cap { width: 68px; height: 34px; margin-left: auto; margin-right: 3px; }
                .view { width: 45px; flex: none; display: flex; align-items: center; justify-content: center; }
                .view svg { width: 16px; height: 16px; }
                .btn { width: 45.9px; flex: none; display: flex; align-items: center; justify-content: center; position: relative; }
                .btn svg { width: 23px; height: 23px; overflow: visible; }
                .btn i { position: absolute; left: 3px; right: 3px; bottom: 0; height: 2px; }
                .tray { margin-left: auto; padding-right: 9px; display: flex; align-items: center; height: 100%; }
                .tray > * { flex: none; }
                .tray svg { display: block; }
                .clock { width: 60px; text-align: center; line-height: 17px; font-size: 11.500px; }
                .note { position: relative; width: 30px; height: 100%; display: flex; align-items: center; margin-left: 11px; }
                .note b {
                    position: absolute;
                    left: 7px;
                    top: 15px;
                    width: 19px;
                    height: 18px;
                    border-radius: 50%;
                    background: #2a3439;
                    border: 1px solid #aab4b8;
                    box-sizing: border-box;
                    font: 700 11px/16px "Open Sans", sans-serif;
                    text-align: center;
                }
            </style>
            <div class="start">
                <svg viewBox="0 0 15 15"><path d="M0 2l6.500-1v6H0zM7.500.800L15 0v7H7.500zM0 8h6.500v6L0 13zM7.500 8H15v7l-7.500-1z" fill="#f3f5f6"/></svg>
            </div>
            <div class="search">
                <svg class="glass" viewBox="0 0 17 17"><circle cx="10.500" cy="6.500" r="5" fill="none" stroke="#2b2b2b" stroke-width="1.300"/><path d="M7 10.500L1.500 16" stroke="#2b2b2b" stroke-width="1.500"/></svg>
                <span>Type here to search</span>
                <svg class="cap" viewBox="0 0 68 34">
                    <path d="M2 11l26-5 14 5-22 7z" fill="#33373a"/><path d="M11 14v9c5 4 14 3 18-2v-7l-9 4z" fill="#55595c"/>
                    <path d="M6 12v15" stroke="#c9a83a" stroke-width="1.500"/><path d="M4 27h4l1 7H4z" fill="#d8b63c"/>
                    <path d="M28 29l36-10c2 2 2 5 0 7L31 33c-3-1-4-3-3-4z" fill="#e5dfc1"/><path d="M45 20l4 12 5-2-3-11z" fill="#c43a3a"/><circle cx="51" cy="20" r="3" fill="#c43a3a"/>
                </svg>
            </div>
            <div class="view">
                <svg viewBox="0 0 16 16"><path d="M1 2h9M1 14h9" stroke="#dfe5e8"/><rect x="1.500" y="4.500" width="8" height="7" fill="none" stroke="#dfe5e8"/><path d="M13 2h2v5h-2zM13 9h2v5h-2z" fill="none" stroke="#dfe5e8" stroke-width=".9"/></svg>
            </div>
            ${buttons}
            <div class="tray">
                <span style="width:19px;font-size:11.500px;margin-right:2px">EN</span>
                <svg width="15" height="12" viewBox="0 0 15 12" style="margin-right:27px"><path d="M1 4h13v7H1z" fill="#9ba4a8"/><path d="M7 4c0-2 1-2 3-2s2-1 2-2" fill="none" stroke="#9ba4a8"/><path d="M3 6h9M3 8h9" stroke="#14252e" stroke-dasharray="1.500 1"/></svg>
                <svg width="24" height="24" viewBox="0 0 24 24" style="margin-right:6px"><circle cx="12" cy="13" r="10" fill="#eeb62c"/><path d="M1 10h17M4 14h20M2 18h14" stroke="#fff4c8" stroke-width="1.600"/><circle cx="20" cy="4" r="2.500" fill="#d9362f"/></svg>
                <span style="width:30px;font-size:13.500px;margin-right:21px">36°C</span>
                <svg width="13" height="8" viewBox="0 0 13 8" style="margin-right:9px"><path d="M1 7l5.500-5.500L12 7" fill="none" stroke="#e8edef" stroke-width="1.300"/></svg>
                <svg width="12" height="16" viewBox="0 0 12 16" style="margin-right:11px"><rect x="1" y="4" width="8" height="8" rx="2" fill="none" stroke="#dfe5e8"/><path d="M9 7l2-1v4l-2-1M3 1h4M3 15h4" fill="none" stroke="#dfe5e8"/></svg>
                <svg width="12" height="18" viewBox="0 0 12 18" style="margin-right:9px"><rect x="3" y="0" width="6" height="11" rx="3" fill="#eef2f4"/><path d="M1 8c0 4 2 6 5 6s5-2 5-6M6 14v3" fill="none" stroke="#eef2f4" stroke-width="1.200"/></svg>
                <svg width="16" height="15" viewBox="0 0 16 15" style="margin-right:6px"><path d="M3 2h12v9H7M1 5h5v8H1zM9 11v3M6 14h6" fill="none" stroke="#dfe5e8"/></svg>
                <svg width="16" height="13" viewBox="0 0 16 13" style="margin-right:3px"><path d="M1 4h3l4-3v11L4 9H1z" fill="none" stroke="#dfe5e8"/><path d="M10.500 4c1 1.500 1 3.500 0 5M13 2c2 3 2 6 0 9" fill="none" stroke="#dfe5e8"/></svg>
                <div class="clock">1:27 PM<br>5/24/2023</div>
                <div class="note">
                    <svg width="18" height="15" viewBox="0 0 18 15"><path d="M0 0h18v12H7l-3 3v-3H0z" fill="#f0f3f5"/><path d="M3 3.500h12M3 6.500h12" stroke="#14252e"/></svg>
                    <b>20</b>
                </div>
            </div>
        `;
    }
}

customElements.define("desk-icon", DeskIcon);
customElements.define("note-pad", NotePad);
customElements.define("toast-card", ToastCard);
customElements.define("rec-tab", RecTab);
customElements.define("mouse-pointer", MousePointer);
customElements.define("task-bar", TaskBar);
customElements.define("win-desktop", WinDesktop);
</script>
</body>
</html>
